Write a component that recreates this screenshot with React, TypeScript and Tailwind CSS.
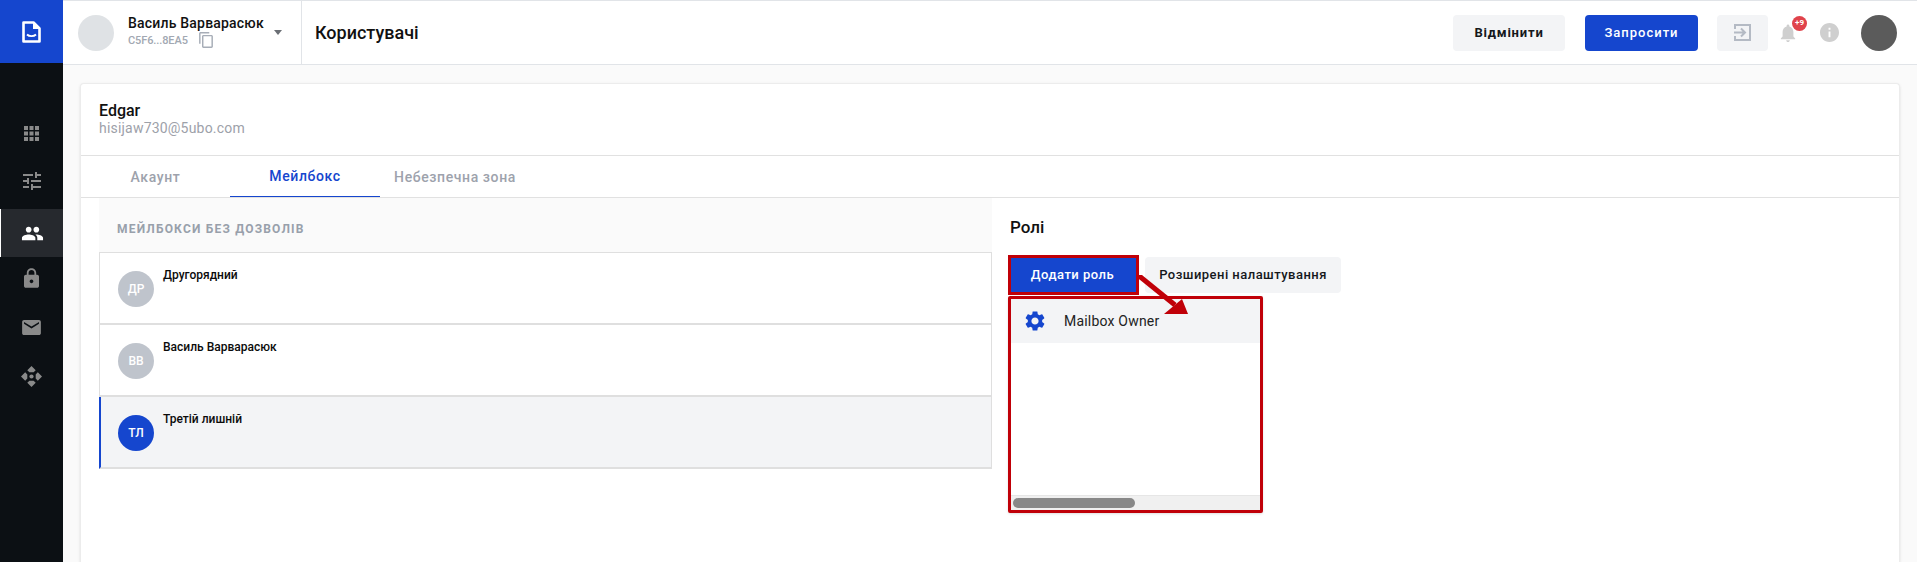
const font = "font-['Roboto',sans-serif]";

function GridIcon() {
  return (
    <svg width="15" height="15" viewBox="0 0 15 15" fill="#8a8a8a">
      {[0, 5.5, 11].map((y) =>
        [0, 5.5, 11].map((x) => <rect key={`${x}-${y}`} x={x} y={y} width="4" height="4" />),
      )}
    </svg>
  );
}

function TuneIcon() {
  return (
    <svg width="18" height="18" viewBox="3 3 18 18" fill="#8a8a8a">
      <path d="M3 17v2h6v-2H3zM3 5v2h10V5H3zm10 16v-2h8v-2h-8v-2h-2v6h2zM7 9v2H3v2h4v2h2V9H7zm14 4v-2H11v2h10zm-6-4h2V7h4V5h-4V3h-2v6z" />
    </svg>
  );
}

function GroupIcon() {
  return (
    <svg width="23" height="23" viewBox="0 0 24 24" fill="#fff">
      <path d="M16 11c1.66 0 2.99-1.34 2.99-3S17.66 5 16 5s-3 1.34-3 3 1.34 3 3 3zm-8 0c1.66 0 2.99-1.34 2.99-3S9.66 5 8 5 5 6.34 5 8s1.34 3 3 3zm0 2c-2.33 0-7 1.17-7 3.5V19h14v-2.5C15 14.17 10.33 13 8 13zm8 0c-.29 0-.62.02-.97.05 1.16.84 1.97 1.97 1.97 3.45V19h6v-2.5c0-2.33-4.67-3.5-7-3.5z" />
    </svg>
  );
}

function LockIcon() {
  return (
    <svg width="15" height="20" viewBox="4 1 16 21" fill="#8a8a8a">
      <path d="M18 8h-1V6c0-2.76-2.24-5-5-5S7 3.24 7 6v2H6c-1.1 0-2 .9-2 2v10c0 1.1.9 2 2 2h12c1.1 0 2-.9 2-2V10c0-1.1-.9-2-2-2zm-6 9c-1.1 0-2-.9-2-2s.9-2 2-2 2 .9 2 2-.9 2-2 2zm3.1-9H8.9V6c0-1.71 1.39-3.1 3.1-3.1s3.1 1.39 3.1 3.1v2z" />
    </svg>
  );
}

function MailIcon() {
  return (
    <svg width="19" height="15" viewBox="2 4 20 16" fill="#8a8a8a">
      <path d="M20 4H4c-1.1 0-2 .9-2 2v12c0 1.1.9 2 2 2h16c1.1 0 2-.9 2-2V6c0-1.1-.9-2-2-2zm0 4l-8 5-8-5V6l8 5 8-5v2z" />
    </svg>
  );
}

function MoveIcon() {
  return (
    <svg width="21" height="21" viewBox="0 0 20 20" fill="#8a8a8a">
      <path d="M10 0l4 4-2 2H8L6 4l4-4zM0 10l4-4 2 2v4l-2 2-4-4zM20 10l-4 4-2-2V8l2-2 4 4zM10 20l-4-4 2-2h4l2 2-4 4z" />
      <circle cx="10" cy="10" r="2" />
    </svg>
  );
}

function LogoIcon() {
  return (
    <svg width="19" height="22" viewBox="0 0 19 22" fill="none">
      <path d="M1.5 1.5h10l6 6v13h-16V1.5z" stroke="#fff" strokeWidth="2.6" strokeLinejoin="round" />
      <path d="M11 1.5v6.5h6.5" fill="#fff" />
      <path d="M5 13.5c2.2 2.2 6.8 2.2 9 0" stroke="#fff" strokeWidth="1.8" fill="none" />
    </svg>
  );
}

function SideItem({ children, active, className = '' }: { children: React.ReactNode; active?: boolean; className?: string }) {
  return (
    <div
      className={`h-12 flex items-center justify-center ${
        active ? 'bg-[#26292e] border-l border-white' : ''
      } ${className}`}
    >
      {children}
    </div>
  );
}

function Sidebar() {
  return (
    <aside className="w-[63px] shrink-0 bg-[#0c1014] flex flex-col">
      <div className="h-[63px] bg-[#1546ce] flex items-center justify-center">
        <LogoIcon />
      </div>
      <div className="pt-[46px] flex flex-col">
        <SideItem><GridIcon /></SideItem>
        <SideItem className="mb-1"><TuneIcon /></SideItem>
        <SideItem active><GroupIcon /></SideItem>
        <SideItem className="pb-[6px]"><LockIcon /></SideItem>
        <SideItem className="pb-1"><MailIcon /></SideItem>
        <SideItem className="pb-[2px]"><MoveIcon /></SideItem>
      </div>
    </aside>
  );
}

function TopBar() {
  return (
    <header className="h-[65px] shrink-0 bg-white border-y border-[#e1e4e8] flex items-center">
      <div className="w-[239px] h-full border-r border-[#e1e4e8] flex items-center pl-[15px] shrink-0">
        <div className="w-9 h-9 rounded-full bg-[#dfe2e5] shrink-0" />
        <div className="ml-[14px] w-[143px] -mt-[2px]">
          <div className="text-[14px] leading-[17px] font-medium text-[#111] tracking-[0.2px]">Василь Варварасюк</div>
          <div className="flex items-center text-[11px] leading-[15px] font-medium text-[#a2a8b2] tracking-[-0.1px]">
            C5F6...8EA5
            <svg width="16" height="16" viewBox="2 1 19 22" fill="#a7adb7" className="ml-[10px]">
              <path d="M16 1H4c-1.1 0-2 .9-2 2v14h2V3h12V1zm3 4H8c-1.1 0-2 .9-2 2v14c0 1.1.9 2 2 2h11c1.1 0 2-.9 2-2V7c0-1.1-.9-2-2-2zm0 16H8V7h11v14z" />
            </svg>
          </div>
        </div>
        <div className="ml-[3px] w-0 h-0 border-x-[4px] border-x-transparent border-t-[5px] border-t-[#6b6f75]" />
      </div>
      <h1 className="ml-[13px] text-[18px] font-medium text-[#111]">Користувачі</h1>
      <div className="ml-auto flex items-center pr-5">
        <button className="w-[112px] h-9 rounded bg-[#f3f4f6] text-[13px] font-bold tracking-[0.8px] text-[#15181c]">Відмінити</button>
        <button className="ml-5 w-[113px] h-9 rounded bg-[#1546ce] text-[13px] font-medium tracking-[1px] text-white">Запросити</button>
        <button className="ml-[19px] w-[51px] h-9 rounded bg-[#f3f4f6] flex items-center justify-center">
          <svg width="17" height="17" viewBox="0 0 17 17" fill="none" stroke="#b4bac4" strokeWidth="2">
            <path d="M1 5V1h15v15H1v-4" />
            <path d="M0 8.5h10M7 4.5l4 4-4 4" />
          </svg>
        </button>
        <div className="relative ml-[8px] w-[24px] flex justify-center">
          <svg width="16" height="18" viewBox="4 2 16 20" fill="#cfcfcf">
            <path d="M12 22c1.1 0 2-.9 2-2h-4c0 1.1.9 2 2 2zm6-6v-5c0-3.07-1.63-5.64-4.5-6.32V4c0-.83-.67-1.5-1.5-1.5s-1.5.67-1.5 1.5v.68C7.64 5.36 6 7.92 6 11v5l-2 2v1h16v-1l-2-2z" />
          </svg>
          <span className="absolute -top-[8px] left-[16px] w-[15px] h-[15px] rounded-full bg-[#e0434b] text-white text-[8px] font-bold flex items-center justify-center">+9</span>
        </div>
        <svg width="19" height="19" viewBox="2 2 20 20" fill="#cfcfcf" className="ml-[20px]">
          <path d="M12 2C6.48 2 2 6.48 2 12s4.48 10 10 10 10-4.48 10-10S17.52 2 12 2zm1 15h-2v-6h2v6zm0-8h-2V7h2v2z" />
        </svg>
        <div className="ml-[22px] w-9 h-9 rounded-full bg-[#5b5b5b]" />
      </div>
    </header>
  );
}

function MailboxRow({ name, initials, active }: { name: string; initials: string; active?: boolean }) {
  return (
    <div
      className={`h-[72px] border-b-2 border-[#dfdfdf] flex pt-[18px] ${
        active ? 'bg-[#f3f4f6] border-l-2 border-l-[#1546ce] pl-[17px]' : 'bg-white border-l border-l-[#dfdfdf] pl-[18px]'
      }`}
    >
      <div
        className={`w-9 h-9 rounded-full flex items-center justify-center text-white text-[12px] font-medium ${
          active ? 'bg-[#1546ce]' : 'bg-[#bfc4cc]'
        }`}
      >
        {initials}
      </div>
      <div className="ml-[9px] -mt-[4px] text-[12px] leading-[16px] font-medium text-[#0b0b0b]">{name}</div>
    </div>
  );
}

function RolesPanel() {
  return (
    <div className="pl-[18px] pt-[19px]">
      <h2 className="text-[17px] leading-[20px] font-medium text-[#111]">Ролі</h2>
      <div className="relative mt-5">
        <div className="flex">
          <button className="w-[127px] h-[36px] rounded-none pr-[2px] bg-[#1546ce] text-[13px] font-medium tracking-[0.5px] text-white outline-3 outline-[#c00008] -outline-offset-1">
            Додати роль
          </button>
          <button className="ml-2 w-[196px] h-[36px] rounded bg-[#f3f4f6] text-[13px] font-medium tracking-[0.47px] text-[#15181c]">
            Розширені налаштування
          </button>
        </div>
        <div className="mt-[3px] -ml-[2px] w-[255px] h-[217px] border-[3px] border-[#c00008] rounded-[2px] bg-white flex flex-col shadow-sm">
          <div className="h-[44px] bg-[#f3f4f6] flex items-center pl-[14px] text-[14px] text-[#222] tracking-[0.2px]">
            <svg width="20" height="20" viewBox="2 2 20 20" fill="#1546ce">
              <path d="M19.14 12.94c.04-.3.06-.61.06-.94 0-.32-.02-.64-.07-.94l2.03-1.58c.18-.14.23-.41.12-.61l-1.92-3.32c-.12-.22-.37-.29-.59-.22l-2.39.96c-.5-.38-1.03-.7-1.62-.94l-.36-2.54c-.04-.24-.24-.41-.48-.41h-3.84c-.24 0-.43.17-.47.41l-.36 2.54c-.59.24-1.13.57-1.62.94l-2.39-.96c-.22-.08-.47 0-.59.22L2.74 8.87c-.12.21-.08.47.12.61l2.03 1.58c-.05.3-.09.63-.09.94s.02.64.07.94l-2.03 1.58c-.18.14-.23.41-.12.61l1.92 3.32c.12.22.37.29.59.22l2.39-.96c.5.38 1.03.7 1.62.94l.36 2.54c.05.24.24.41.48.41h3.84c.24 0 .44-.17.47-.41l.36-2.54c.59-.24 1.13-.56 1.62-.94l2.39.96c.22.08.47 0 .59-.22l1.92-3.32c.12-.22.07-.47-.12-.61l-2.01-1.58zM12 15.6c-1.98 0-3.6-1.62-3.6-3.6s1.62-3.6 3.6-3.6 3.6 1.62 3.6 3.6-1.62 3.6-3.6 3.6z" />
            </svg>
            <span className="ml-[19px]">Mailbox Owner</span>
          </div>
          <div className="flex-1" />
          <div className="h-[15px] bg-[#f0f0f0] border-t border-[#e6e6e6] flex items-center pl-[2px]">
            <div className="w-[122px] h-[10px] rounded-full bg-[#888]" />
          </div>
        </div>
        {/* annotation arrow over the dropdown */}
        <svg className="absolute left-[128px] top-[18px]" width="54" height="44" viewBox="0 0 54 44">
          <path d="M0 0L37 30" stroke="#c00008" strokeWidth="5" />
          <path d="M44 24L26 39L50 39Z" fill="#c00008" />
        </svg>
      </div>
    </div>
  );
}

export default function App() {
  return (
    <div className={`${font} h-[562px] w-[1917px] flex overflow-hidden bg-[#fafafa]`}>
      <Sidebar />
      <div className="flex-1 flex flex-col min-w-0">
        <TopBar />
        <main className="flex-1 pl-[17px] pr-[17px] pt-[18px] min-h-0">
          <div className="h-full bg-white rounded-t border border-[#ececec] border-b-0 shadow-sm">
            <div className="h-[72px] border-b border-[#e1e1e1] pl-[18px] pt-[18px]">
              <div className="text-[16px] leading-[18px] font-medium text-[#111]">Edgar</div>
              <div className="text-[14px] leading-[17px] text-[#9da1a9] tracking-[0.2px]">hisijaw730@5ubo.com</div>
            </div>
            <div className="h-[42px] border-b border-[#e1e1e1] flex text-[14px] font-medium tracking-[0.6px]">
              <div className="w-[149px] pt-[1px] flex items-center justify-center text-[#9da2ac]">Акаунт</div>
              <div className="w-[150px] pt-[1px] flex items-center justify-center text-[#1546ce] border-b border-[#1546ce]">Мейлбокс</div>
              <div className="w-[150px] pt-[1px] flex items-center justify-center text-[#9da2ac] whitespace-nowrap">Небезпечна зона</div>
            </div>
            <div className="pl-[18px] grid grid-cols-[893px_1fr]">
              <div>
                <div className="h-[55px] bg-[#fafafa] border-b border-[#dfdfdf] pl-[18px] pt-[7px] flex items-center text-[12px] font-bold tracking-[1.2px] text-[#98a0ab]">
                  МЕЙЛБОКСИ БЕЗ ДОЗВОЛІВ
                </div>
                <div className="border-r border-[#dfdfdf]">
                  <MailboxRow name="Другорядний" initials="ДР" />
                  <MailboxRow name="Василь Варварасюк" initials="ВВ" />
                  <MailboxRow name="Третій лишній" initials="ТЛ" active />
                </div>
              </div>
              <RolesPanel />
            </div>
          </div>
        </main>
      </div>
    </div>
  );
}
